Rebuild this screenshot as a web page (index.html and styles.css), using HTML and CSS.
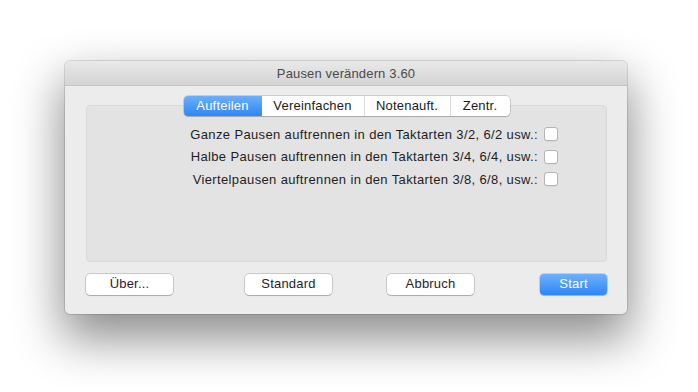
FILE: index.html
```html
<!DOCTYPE html>
<html lang="de">
<head>
<meta charset="utf-8">
<title>Pausen verändern 3.60</title>
<link rel="stylesheet" href="styles.css">
</head>
<body>
<div class="window">
  <div class="titlebar">Pausen verändern 3.60</div>
  <div class="content">
    <div class="tabview">
      <div class="tabs">
        <div class="tab tab-active tab-w1">Aufteilen</div>
        <div class="tab tab-w2">Vereinfachen</div>
        <div class="tab tab-w3">Notenauft.</div>
        <div class="tab tab-w4">Zentr.</div>
      </div>
      <div class="panel">
        <label class="row"><span>Ganze Pausen auftrennen in den Taktarten 3/2, 6/2 usw.:</span><span class="check"></span></label>
        <label class="row"><span>Halbe Pausen auftrennen in den Taktarten 3/4, 6/4, usw.:</span><span class="check"></span></label>
        <label class="row"><span>Viertelpausen auftrennen in den Taktarten 3/8, 6/8, usw.:</span><span class="check"></span></label>
      </div>
    </div>
    <div class="buttons">
      <div class="btn btn-about">Über...</div>
      <div class="btn btn-std">Standard</div>
      <div class="btn btn-cancel">Abbruch</div>
      <div class="btn btn-start">Start</div>
    </div>
  </div>
</div>
</body>
</html>
```
FILE: styles.css
```css
html, body {
  margin: 0;
  padding: 0;
  background: #ffffff;
}
body {
  width: 698px;
  height: 392px;
  overflow: hidden;
  padding: 61px 0 0 65px;
  box-sizing: border-box;
  font-family: "Liberation Sans", Arial, sans-serif;
  font-size: 13px;
  color: #1e1e1e;
}
.window {
  width: 562px;
  height: 253px;
  border-radius: 5px;
  background: #ececec;
  box-shadow: 0 0 0 1px rgba(0,0,0,0.12), 0 22px 48px 3px rgba(0,0,0,0.45);
  overflow: hidden;
  display: flex;
  flex-direction: column;
}
.titlebar {
  height: 24px;
  flex: none;
  background: linear-gradient(#e9e9e9, #d4d4d4);
  border-bottom: 1px solid #c4c4c4;
  text-align: center;
  line-height: 25px;
  color: #4a4a4a;
  letter-spacing: 0.15px;
}
.content {
  flex: 1;
  padding: 10px 20px 0 21px;
  display: flex;
  flex-direction: column;
}
.tabview {
  display: flex;
  flex-direction: column;
  align-items: center;
}
.tabs {
  display: flex;
  height: 20px;
  margin-bottom: -11px;
  z-index: 1;
  border-radius: 4px;
  background: #ffffff;
  box-shadow: 0 0 0 0.5px rgba(0,0,0,0.25), 0 1px 1px rgba(0,0,0,0.15);
}
.tab {
  box-sizing: border-box;
  height: 20px;
  line-height: 20px;
  text-align: center;
  color: #1a1a1a;
  border-left: 1px solid #dcdcdc;
  letter-spacing: 0.2px;
}
.tab:first-child { border-left: none; border-radius: 4px 0 0 4px; }
.tab:last-child { border-radius: 0 4px 4px 0; }
.tab-active {
  background: linear-gradient(#6bb0fb, #2f86f6);
  color: #ffffff;
}
.tab-active + .tab { border-left: none; }
.tab-w1 { width: 78px; }
.tab-w2 { width: 102px; }
.tab-w3 { width: 86px; }
.tab-w4 { width: 60px; }
.panel {
  align-self: stretch;
  box-sizing: border-box;
  height: 157px;
  background: #e3e3e3;
  border: 1px solid #dadada;
  border-radius: 4px;
  padding: 17px 48px 0 0;
  display: flex;
  flex-direction: column;
  align-items: flex-end;
}
.row {
  display: flex;
  align-items: center;
  height: 22.5px;
  letter-spacing: 0.36px;
}
.check {
  width: 12px;
  height: 12px;
  margin-left: 6px;
  background: #ffffff;
  border: 1px solid #b4b4b4;
  border-radius: 3px;
  box-shadow: 0 0.5px 0.5px rgba(0,0,0,0.08);
}
.buttons {
  display: flex;
  margin-top: 12px;
}
.btn {
  box-sizing: border-box;
  height: 21px;
  line-height: 20px;
  width: 87px;
  text-align: center;
  background: #ffffff;
  border-radius: 4px;
  box-shadow: 0 0 0 0.5px rgba(0,0,0,0.3), 0 1px 1px rgba(0,0,0,0.15);
  letter-spacing: 0.2px;
}
.btn-std { margin-left: 72px; }
.btn-cancel { margin-left: 55px; }
.btn-start {
  margin-left: auto;
  width: 67px;
  margin-right: 0;
  background: linear-gradient(#6cb1fb, #2f86f6);
  color: #ffffff;
  box-shadow: 0 0 0 0.5px rgba(0,60,180,0.35), 0 1px 1px rgba(0,0,0,0.15);
}
```
